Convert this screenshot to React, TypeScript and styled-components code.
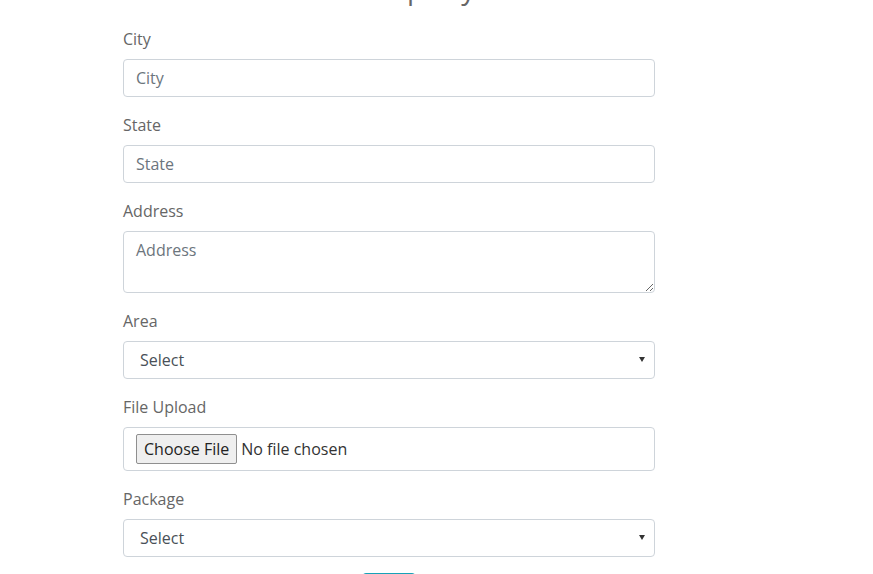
import styled, { createGlobalStyle } from 'styled-components'

const GlobalStyle = createGlobalStyle`
  html, body {
    margin: 0;
    padding: 0;
    background: #fff;
    overflow: hidden;
  }
  body {
    font-family: "Open Sans", "Liberation Sans", sans-serif;
    font-size: 16px;
    line-height: 1.5;
    color: #666;
  }
  * { box-sizing: border-box; }
`

const Page = styled.div`
  width: 873px;
  height: 574px;
  overflow: hidden;
`

const Form = styled.form`
  width: 532px;
  margin-left: 123px;
  display: flex;
  flex-direction: column;
`

const Title = styled.h2`
  margin: -30px 0 21px;
  font-size: 28px;
  font-weight: 400;
  line-height: 36px;
  text-align: center;
  color: #666;
`

const Group = styled.div`
  display: flex;
  flex-direction: column;
  margin-bottom: 16px;
`

const Label = styled.label`
  display: block;
  margin-bottom: 8px;
  line-height: 24px;
  color: #666;
`

const fieldBase = `
  width: 100%;
  border: 1px solid #ced4da;
  border-radius: 4px;
  background: #fff;
  font-family: "Open Sans", "Liberation Sans", sans-serif;
  font-size: 16px;
  line-height: 24px;
  color: #495057;
  outline: none;
  &::placeholder { color: #6c757d; opacity: 1; }
`

const Input = styled.input`
  ${fieldBase}
  height: 38px;
  padding: 6px 12px;
`

const TextArea = styled.textarea`
  ${fieldBase}
  display: block;
  height: 62px;
  padding: 6px 12px;
  resize: both;
`

const SelectWrap = styled.div`
  position: relative;
`

const Select = styled.select`
  ${fieldBase}
  appearance: none;
  height: 38px;
  padding: 6px 12px 6px 16px;
  color: #495057;
`

const Caret = styled.span`
  position: absolute;
  right: 10px;
  top: 16px;
  width: 0;
  height: 0;
  border-left: 3px solid transparent;
  border-right: 3px solid transparent;
  border-top: 5px solid #333;
  pointer-events: none;
`

const FileBox = styled.div`
  ${fieldBase}
  height: 44px;
  padding: 6px 12px;
  display: flex;
  align-items: center;
  gap: 4px;
`

const FileButton = styled.label`
  height: 30px;
  padding: 0 7px;
  display: flex;
  align-items: center;
  background: #efefef;
  border: 1px solid #8f8f8f;
  border-radius: 2px;
  color: #222;
  font-size: 16px;
`

const FileName = styled.span`
  color: #333;
`

const Actions = styled.div`
  display: flex;
  justify-content: center;
`

const Button = styled.button`
  width: 54px;
  height: 38px;
  border: 1px solid #17a2b8;
  border-radius: 4px;
  background: #17a2b8;
  color: #fff;
  font-family: inherit;
  font-size: 16px;
`

export default function App() {
  return (
    <Page>
      <GlobalStyle />
      <Form onSubmit={e => e.preventDefault()}>
        <Title>Add Property</Title>
        <Group>
          <Label htmlFor="city">City</Label>
          <Input id="city" placeholder="City" />
        </Group>
        <Group>
          <Label htmlFor="state">State</Label>
          <Input id="state" placeholder="State" />
        </Group>
        <Group>
          <Label htmlFor="address">Address</Label>
          <TextArea id="address" placeholder="Address" />
        </Group>
        <Group>
          <Label htmlFor="area">Area</Label>
          <SelectWrap>
            <Select id="area" defaultValue="">
              <option value="">Select</option>
            </Select>
            <Caret />
          </SelectWrap>
        </Group>
        <Group>
          <Label>File Upload</Label>
          <FileBox>
            <FileButton>Choose File</FileButton>
            <FileName>No file chosen</FileName>
          </FileBox>
        </Group>
        <Group>
          <Label htmlFor="package">Package</Label>
          <SelectWrap>
            <Select id="package" defaultValue="">
              <option value="">Select</option>
            </Select>
            <Caret />
          </SelectWrap>
        </Group>
        <Actions>
          <Button type="submit">Add</Button>
        </Actions>
      </Form>
    </Page>
  )
}
